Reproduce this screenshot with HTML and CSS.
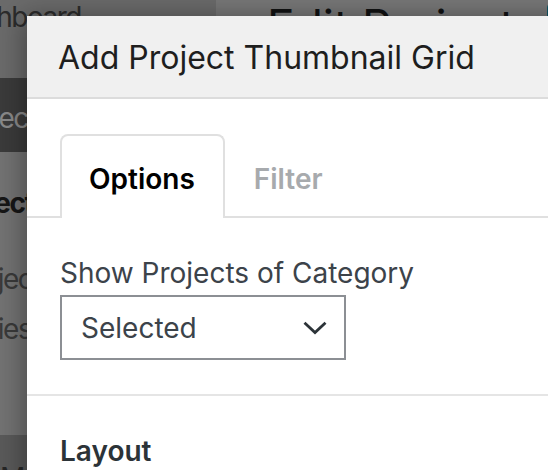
FILE: index.html
```html
<!DOCTYPE html>
<html lang="en">
<head>
<meta charset="utf-8">
<title>Add Project Thumbnail Grid</title>
<link rel="stylesheet" href="styles.css">
</head>
<body>
<div class="admin">
  <nav class="sidebar">
    <div class="menu-top">Dashboard</div>
    <div class="menu-current">Projects</div>
    <ul class="submenu">
      <li class="sub-item sub-current">All Projects</li>
      <li class="sub-item sub-second">Add Project</li>
      <li class="sub-item sub-third">Categories</li>
    </ul>
    <div class="menu-next">Media</div>
  </nav>
  <main class="content">
    <h1 class="page-title">Edit Project</h1>
    <span class="title-action">Add New</span>
  </main>
</div>

<div class="modal" role="dialog">
  <header class="modal-header">
    <h1 class="modal-title">Add Project Thumbnail Grid</h1>
  </header>
  <div class="tabs">
    <div class="tab tab-active">Options</div>
    <div class="tab">Filter</div>
  </div>
  <div class="field">
    <label class="field-label">Show Projects of Category</label>
    <div class="select">
      <span class="select-value">Selected</span>
      <svg class="chevron" width="24" height="14" viewBox="0 0 24 14" aria-hidden="true">
        <path d="M1.5 1.8 L12 11.6 L22.5 1.8" fill="none" stroke="#2c3338" stroke-width="2.8"/>
      </svg>
    </div>
  </div>
  <section class="panel">
    <h2 class="panel-title">Layout</h2>
  </section>
</div>
</body>
</html>
```

FILE: styles.css
```css
* {
  box-sizing: border-box;
  margin: 0;
  padding: 0;
}

html,
body {
  width: 548px;
  height: 470px;
  overflow: hidden;
}

body {
  position: relative;
  font-family: Inter, "Noto Sans", "Liberation Sans", sans-serif;
  background: #787878;
}

/* ---------- dimmed admin page behind the modal ---------- */

.admin {
  display: flex;
  height: 470px;
  overflow: hidden;
}

.sidebar {
  flex: none;
  width: 216px;
  height: 470px;
  display: flex;
  flex-direction: column;
  background: #6b6b6b;
  font-size: 28px;
  line-height: 34px;
  letter-spacing: -1.5px;
  white-space: nowrap;
  overflow: hidden;
}

.sidebar > * {
  flex: none;
}

.menu-top {
  height: 78px;
  text-indent: -50px;
  color: #2c2c2c;
}

.menu-current {
  height: 74px;
  padding-top: 23px;
  text-indent: -47px;
  background: #3b3b3b;
  color: #8a8a8a;
}

.submenu {
  list-style: none;
  height: 283px;
  padding-top: 34px;
  background: #737373;
}

.sub-item {
  color: #3a3a3a;
}

.sub-current {
  font-weight: 700;
  color: #161616;
  text-indent: -90px;
}

.sub-second {
  margin-top: 42px;
  text-indent: -98px;
}

.sub-third {
  margin-top: 16px;
  text-indent: -98px;
}

.menu-next {
  height: 35px;
  padding-top: 26px;
  overflow: hidden;
  background: #5a5a5a;
  color: #262626;
}

.content {
  flex: 1;
  display: flex;
  align-items: flex-start;
  gap: 32px;
  padding-left: 51px;
  white-space: nowrap;
}

.page-title {
  margin-top: 3px;
  font-size: 46px;
  line-height: 46px;
  font-weight: 400;
  color: #111213;
}

.title-action {
  flex: none;
  margin-top: 2px;
  height: 60px;
  padding: 10px 20px;
  border: 2px solid #0d5566;
  border-radius: 6px;
  font-size: 26px;
  color: #0d5566;
}

/* ---------- modal ---------- */

.modal {
  position: absolute;
  left: 27px;
  top: 16px;
  width: 600px;
  height: 520px;
  display: flex;
  flex-direction: column;
  background: #fff;
  box-shadow: -4px 0 26px rgba(0, 0, 0, 0.35);
}

.modal > * {
  flex: none;
}

.modal-header {
  height: 83px;
  display: flex;
  align-items: center;
  padding: 3px 0 0 31px;
  background: #f0f0f0;
  border-bottom: 2px solid #dcdcdc;
}

.modal-title {
  font-size: 32px;
  line-height: 40px;
  font-weight: 400;
  color: #1e1e1e;
  white-space: nowrap;
}

.tabs {
  display: flex;
  margin-top: 35px;
  padding-left: 33px;
  border-bottom: 2px solid #e0e0e0;
}

.tab {
  height: 84px;
  margin-bottom: -2px;
  padding: 26px 28px 0 27px;
  border: 2px solid transparent;
  border-bottom: 0;
  border-radius: 8px 8px 0 0;
  font-size: 28px;
  line-height: 34px;
  font-weight: 600;
  color: #a7aaad;
}

.tab-active {
  border-color: #e0e0e0;
  background: #fff;
  color: #000;
}

.field {
  padding: 38px 33px 0;
}

.field-label {
  display: block;
  font-size: 28px;
  line-height: 34px;
  color: #3c434a;
  white-space: nowrap;
}

.select {
  margin-top: 5px;
  width: 286px;
  height: 65px;
  display: flex;
  align-items: center;
  justify-content: space-between;
  padding: 0 17px 0 19px;
  border: 2px solid #8c8f94;
  background: #fff;
}

.select-value {
  font-size: 28px;
  color: #3c434a;
}

.chevron {
  display: block;
}

.panel {
  margin-top: 34px;
  padding: 38px 33px 0;
  border-top: 2px solid #e5e5e5;
}

.panel-title {
  font-size: 28px;
  line-height: 34px;
  font-weight: 600;
  color: #2c3338;
}
```
